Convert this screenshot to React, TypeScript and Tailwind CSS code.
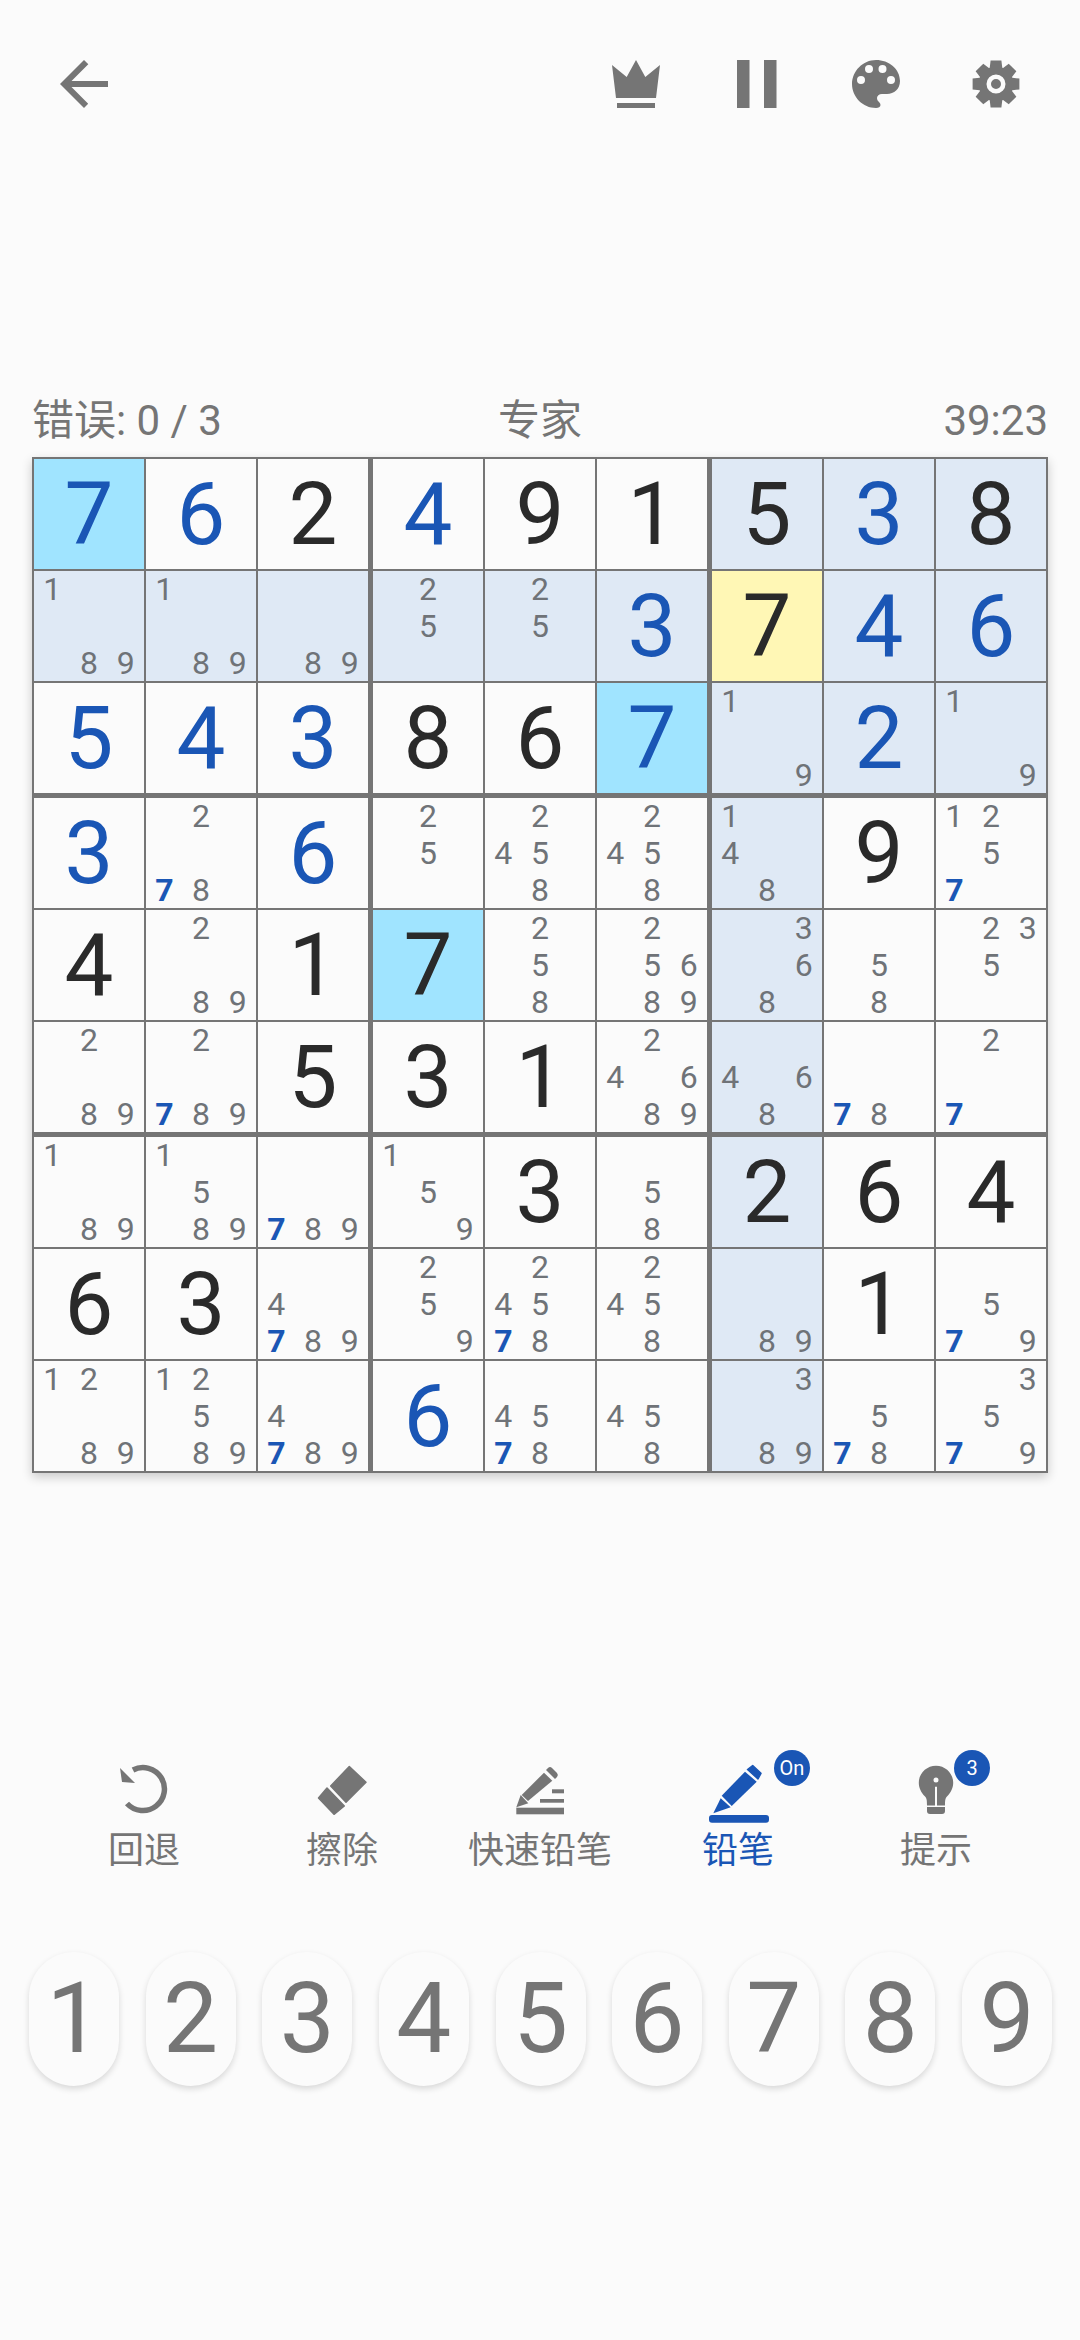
import type { ReactNode } from 'react';

const BLUE = 'text-[#1a56b5]';

// v = big digit, n = pencil notes, user = entered by the player (blue), bg = cell highlight
type Cell = { v?: number; user?: boolean; n?: number[]; bg?: string };

const sky = 'bg-[#a0e4ff]';
const pale = 'bg-[#dfe9f5]';
const yellow = 'bg-[#fff7b5]';

const g = (v: number, bg?: string): Cell => ({ v, bg });
const u = (v: number, bg?: string): Cell => ({ v, user: true, bg });
const p = (s: string, bg?: string): Cell => ({ n: s.split('').map(Number), bg });

const rows: Cell[][] = [
  [u(7, sky), u(6), g(2), u(4), g(9), g(1), g(5, pale), u(3, pale), g(8, pale)],
  [p('189', pale), p('189', pale), p('89', pale), p('25', pale), p('25', pale), u(3, pale), g(7, yellow), u(4, pale), u(6, pale)],
  [u(5), u(4), u(3), g(8), g(6), u(7, sky), p('19', pale), u(2, pale), p('19', pale)],
  [u(3), p('278'), u(6), p('25'), p('2458'), p('2458'), p('148', pale), g(9), p('1257')],
  [g(4), p('289'), g(1), g(7, sky), p('258'), p('25689'), p('368', pale), p('58'), p('235')],
  [p('289'), p('2789'), g(5), g(3), g(1), p('24689'), p('468', pale), p('78'), p('27')],
  [p('189'), p('1589'), p('789'), p('159'), g(3), p('58'), g(2, pale), g(6), g(4)],
  [g(6), g(3), p('4789'), p('259'), p('24578'), p('2458'), p('89', pale), g(1), p('579')],
  [p('1289'), p('12589'), p('4789'), u(6), p('4578'), p('458'), p('389', pale), p('578'), p('3579')],
];

function SudokuCell({ cell }: { cell: Cell }) {
  const bg = cell.bg ?? 'bg-[#fbfbfb]';
  if (cell.v) {
    return (
      <div className={`w-[110px] h-[110px] flex items-center justify-center text-[87px] leading-none ${bg} ${cell.user ? BLUE : 'text-[#2a2a2a]'}`}>
        {cell.v}
      </div>
    );
  }
  return (
    <div className={`w-[110px] h-[110px] grid grid-cols-3 grid-rows-3 text-[32px] leading-none text-[#6f7378] ${bg}`}>
      {[1, 2, 3, 4, 5, 6, 7, 8, 9].map((d) => (
        <div key={d} className={`flex items-center justify-center ${d === 7 ? `font-bold ${BLUE}` : ''}`}>
          {cell.n?.includes(d) ? d : ''}
        </div>
      ))}
    </div>
  );
}

function Board() {
  const boxes = [0, 3, 6].flatMap((r) => [0, 3, 6].map((c) => ({ r, c })));
  return (
    <div className="ml-8 w-[1016px] border-2 border-[#757575] bg-[#757575] grid grid-cols-3 gap-[5px] shadow-[0_4px_10px_rgba(0,0,0,0.2)]">
      {boxes.map(({ r, c }) => (
        <div key={`${r}-${c}`} className="grid grid-cols-3 gap-[2px]">
          {[0, 1, 2].flatMap((i) =>
            [0, 1, 2].map((j) => <SudokuCell key={`${i}${j}`} cell={rows[r + i][c + j]} />)
          )}
        </div>
      ))}
    </div>
  );
}

function TopIcon({ children }: { children: ReactNode }) {
  return (
    <svg viewBox="0 0 72 72" className="w-[72px] h-[72px] fill-[#757575]">
      {children}
    </svg>
  );
}

// 8 tooth gear outline around the middle of the 72 box
function gearPath() {
  const pts: string[] = [];
  for (let i = 0; i < 8; i++) {
    const a = (i * 45 - 90) * (Math.PI / 180);
    const at = (r: number, off: number) => {
      const t = a + off * (Math.PI / 180);
      return `${(36 + r * Math.cos(t)).toFixed(2)} ${(36 + r * Math.sin(t)).toFixed(2)}`;
    };
    pts.push(at(17.5, -21), at(24, -13), at(24, 13), at(17.5, 21));
  }
  return `M${pts.join('L')}Z`;
}

function Header() {
  return (
    <div className="h-[144px] pt-12 pl-12 pr-12 flex justify-between">
      <TopIcon>
        <path d="M60 33H23.5l16.800-16.800L36 12 12 36l24 24 4.200-4.200L23.500 39H60v-6z" />
      </TopIcon>
      <div className="flex gap-12">
        <TopIcon>
          <path d="M12 17l14.700 12L36 12l9.300 17L60 17l-4 33H16z" />
          <rect x="17" y="55" width="38" height="5" />
        </TopIcon>
        <TopIcon>
          <rect x="17" y="12" width="12.500" height="48" />
          <rect x="44" y="12" width="12.500" height="48" />
        </TopIcon>
        <TopIcon>
          <path
            fillRule="evenodd"
            d="M36 12C49 12 60 21 60 33C60 41 54 46 47 46H42C39 46 37 48 37 50C37 52 38 53 39 54C40 55 40.500 56 40.500 57C40.500 59 38.500 60 36 60C23 60 12 49 12 36C12 23 23 12 36 12ZM29 17a4 4 0 1 0 0 8 4 4 0 0 0 0-8ZM42.500 17a4 4 0 1 0 0 8 4 4 0 0 0 0-8ZM21 28a4 4 0 1 0 0 8 4 4 0 0 0 0-8ZM51 28a4 4 0 1 0 0 8 4 4 0 0 0 0-8Z"
          />
        </TopIcon>
        <TopIcon>
          <path
            fillRule="evenodd"
            d={`${gearPath()}M36 26.500a9.500 9.500 0 1 0 0 19 9.500 9.500 0 0 0 0-19ZM36 31a5 5 0 1 1 0 10 5 5 0 0 1 0-10Z`}
          />
        </TopIcon>
      </div>
    </div>
  );
}

function ToolIcon({ className, children }: { className: string; children: ReactNode }) {
  return (
    <svg viewBox="0 0 60 60" className={`w-[60px] h-[60px] overflow-visible ${className}`}>
      {children}
    </svg>
  );
}

const tools = [
  {
    label: '回退',
    icon: (
      <ToolIcon className="fill-none">
        <path d="M6 8l2 14 13 1z" fill="#757575" />
        <path d="M13 43.500A21.500 21.500 0 1 0 19 10" stroke="#757575" strokeWidth="5.500" />
      </ToolIcon>
    ),
  },
  {
    label: '擦除',
    icon: (
      <ToolIcon className="fill-[#757575] stroke-[#757575]">
        <path d="M37.300 6.500L54 22.300 34 42.300 18.700 26z" strokeWidth="1.500" strokeLinejoin="round" />
        <path d="M15 28L32.300 46 22 54.300 6.500 38z" strokeWidth="1.500" strokeLinejoin="round" />
      </ToolIcon>
    ),
  },
  {
    label: '快速铅笔',
    icon: (
      <ToolIcon className="fill-[#757575]">
        <path d="M34 12.700L42.300 20.700 18 41 11.700 35z" />
        <path d="M36 10l2-2a3 3 0 0 1 4 0l5 5a3 3 0 0 1 0 4l-2 2z" />
        <path d="M10.700 35L18.300 43.300 6.300 47.300z" />
        <rect x="6.300" y="47.700" width="47.700" height="6.600" />
        <rect x="30" y="39" width="24" height="3.700" />
        <rect x="42" y="29.300" width="12" height="4" />
      </ToolIcon>
    ),
  },
  {
    label: '铅笔',
    active: true,
    badge: 'On',
    badgeLeft: 'left-[66px]',
    icon: (
      <ToolIcon className="fill-[#1a56b5]">
        <path d="M13.700 35.700L37 11.700 48.700 21.700 23.700 46z" />
        <path d="M39.500 9.500L44.700 5.500 53 13.300 50 19z" stroke="#1a56b5" strokeWidth="1.500" strokeLinejoin="round" />
        <path d="M5.300 53.300L12.700 38.300 22.700 47.300z" />
        <rect x="1" y="55" width="60" height="7.700" rx="3" />
      </ToolIcon>
    ),
  },
  {
    label: '提示',
    badge: '3',
    badgeLeft: 'left-[48px]',
    icon: (
      <ToolIcon className="fill-[#757575]">
        <path
          fillRule="evenodd"
          d="M30 5.700c-9.500 0-17.200 7.600-17.200 17 0 5.500 2.700 10 6 13.500 2 2 2.200 4 2.200 9.300h18c0-5.300.2-7.300 2.200-9.300 3.300-3.500 6-8 6-13.500 0-9.400-7.700-17-17.200-17zM29 26.700h2V45.500h-2zM30 17.500a2.500 2.500 0 1 0 0 5 2.500 2.500 0 0 0 0-5z"
        />
        <path d="M21 47h18v4a3 3 0 0 1-3 3H24a3 3 0 0 1-3-3z" />
      </ToolIcon>
    ),
  },
];

function Tools() {
  return (
    <div className="mt-[287px] ml-[45px] w-[990px] grid grid-cols-5">
      {tools.map((t) => (
        <div key={t.label} className="flex flex-col items-center">
          <div className="relative h-[60px]">
            {t.icon}
            {t.badge && (
              <span className={`absolute ${t.badgeLeft} -top-[10px] w-9 h-9 rounded-full bg-[#1a56b5] text-white text-[20px] flex items-center justify-center`}>
                {t.badge}
              </span>
            )}
          </div>
          <span className={`mt-[6px] text-[36px] leading-[50px] ${t.active ? BLUE : 'text-[#757575]'}`}>
            {t.label}
          </span>
        </div>
      ))}
    </div>
  );
}

function NumberPad() {
  return (
    <div className="mt-[76px] flex justify-between pl-[29px] pr-[28px]">
      {[1, 2, 3, 4, 5, 6, 7, 8, 9].map((d) => (
        <div
          key={d}
          className="w-[90px] h-[134px] rounded-[45px] bg-[#fbfbfb] text-[#757575] text-[98px] leading-none flex items-center justify-center shadow-[0_3px_6px_rgba(0,0,0,0.14)]"
        >
          {d}
        </div>
      ))}
    </div>
  );
}

export default function App() {
  return (
    <div className="w-[1080px] h-[2340px] overflow-hidden bg-[#fbfbfb] font-['Roboto','Noto_Sans_CJK_SC',sans-serif]">
      <Header />
      <div className="mt-[243px] mb-[4px] h-[66px] px-8 grid grid-cols-3 items-center text-[42px] text-[#757575]">
        <span>错误: 0 / 3</span>
        <span className="text-center">专家</span>
        <span className="text-right">39:23</span>
      </div>
      <Board />
      <Tools />
      <NumberPad />
    </div>
  );
}
